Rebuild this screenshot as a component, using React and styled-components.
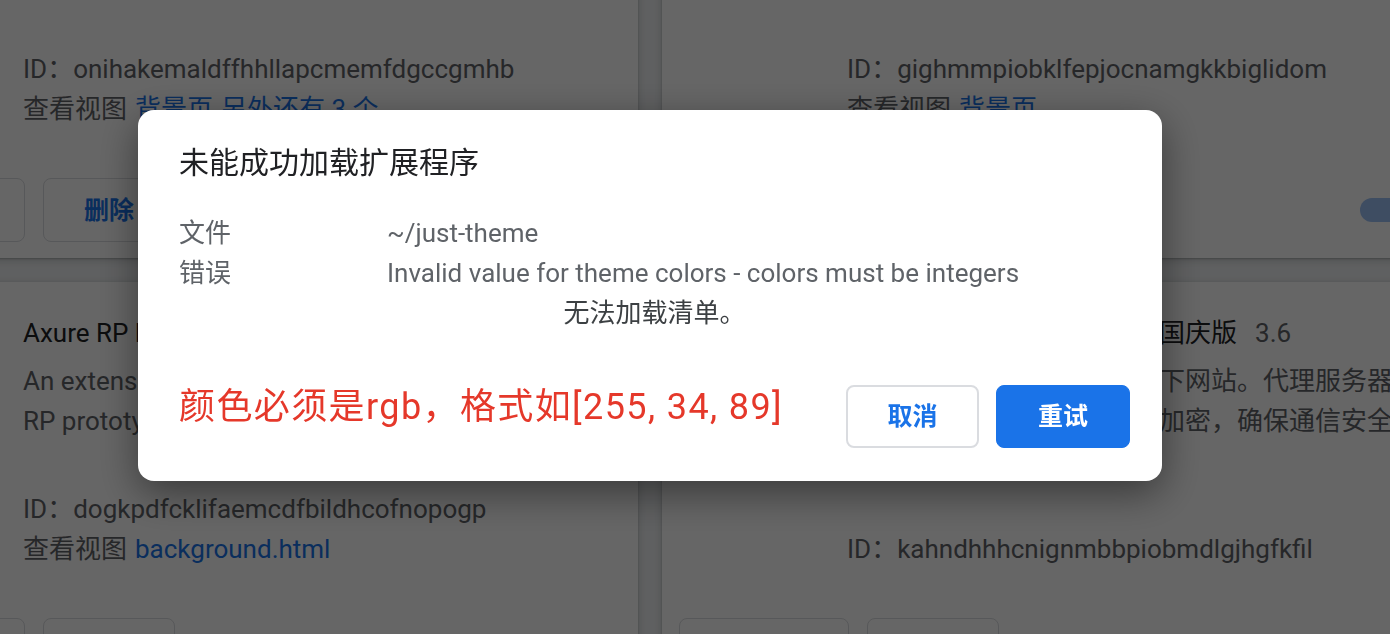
import React from 'react';
import styled, { createGlobalStyle } from 'styled-components';

const GlobalStyle = createGlobalStyle`
  html, body { margin: 0; padding: 0; }
  body {
    width: 1390px;
    height: 634px;
    overflow: hidden;
    background: #eef0f2;
    font-family: Roboto, "Noto Sans CJK SC", sans-serif;
  }
  * { box-sizing: border-box; }
`;

const Page = styled.main`
  display: grid;
  grid-template-columns: 800px 800px;
  column-gap: 24px;
  row-gap: 24px;
  margin: -20px 0 0 -162px;
`;

const Card = styled.section`
  background: #fff;
  border-radius: 8px;
  box-shadow: 0 1px 2px rgba(60, 64, 67, 0.3), 0 2px 6px 2px rgba(60, 64, 67, 0.15);
  display: flex;
  flex-direction: column;
  padding-top: ${(p) => p.$top}px;
`;

const Main = styled.div`
  flex: 1;
  display: flex;
  flex-direction: column;
  padding: 0 40px 0 185px;
  font-size: 26px;
  line-height: 40px;
  color: #5f6368;
  white-space: nowrap;
`;

const TitleRow = styled.div`
  display: flex;
  gap: 18px;
  color: #202124;
`;

const Version = styled.span`
  color: #5f6368;
`;

const Desc = styled.div`
  margin-top: 8px;
`;

const Line = styled.div``;

const Meta = styled.div`
  margin-top: ${(p) => p.$gap || 0}px;
`;

const Link = styled.a`
  color: #1a73e8;
  text-decoration: none;
  margin-left: 8px;
`;

const Actions = styled.div`
  display: flex;
  align-items: center;
  gap: 18px;
  margin-top: 49px;
  padding: 0 34px 16px 17px;
`;

const CardButton = styled.button`
  width: ${(p) => p.$w}px;
  height: 64px;
  padding: 0 0 4px;
  border: 1px solid #dadce0;
  border-radius: 8px;
  background: #fff;
  color: #1a73e8;
  font-family: inherit;
  font-size: 25px;
  font-weight: 700;
`;

const Toggle = styled.span`
  margin-left: auto;
  position: relative;
  width: 68px;
  height: 24px;
  border-radius: 12px;
  background: #9cc0f5;
  &::after {
    content: '';
    position: absolute;
    right: -4px;
    top: -4px;
    width: 32px;
    height: 32px;
    border-radius: 50%;
    background: #1a73e8;
  }
`;

const Overlay = styled.div`
  position: fixed;
  inset: 0;
  background: rgba(0, 0, 0, 0.6);
  display: flex;
  align-items: flex-start;
  padding: 110px 0 0 138px;
`;

const Dialog = styled.div`
  width: 1024px;
  background: #fff;
  border-radius: 16px;
  padding: 33px 32px 33px 41px;
  box-shadow: 0 12px 40px rgba(0, 0, 0, 0.45);
`;

const DialogTitle = styled.h1`
  margin: 0;
  font-size: 30px;
  line-height: 40px;
  font-weight: 400;
  color: #202124;
`;

const InfoGrid = styled.div`
  margin-top: 30px;
  display: grid;
  grid-template-columns: 208px 1fr;
  font-size: 26px;
  line-height: 40px;
  color: #5f6368;
`;

const Notice = styled.div`
  grid-column: 1 / -1;
  text-align: center;
  color: #3c4043;
`;

const Footer = styled.div`
  margin-top: 52px;
  display: flex;
  align-items: flex-start;
  gap: 17px;
`;

const Hint = styled.div`
  flex: 1;
  color: #e5382a;
  font-size: 36px;
  line-height: 44px;
  letter-spacing: 1.4px;
`;

const DialogButton = styled.button`
  width: ${(p) => p.$w}px;
  height: 63px;
  padding: 0 0 5px;
  border-radius: 8px;
  font-family: inherit;
  font-size: 25px;
  font-weight: 700;
  border: ${(p) => (p.$primary ? '1px solid #1a73e8' : '2px solid #dadce0')};
  background: ${(p) => (p.$primary ? '#1a73e8' : '#fff')};
  color: ${(p) => (p.$primary ? '#fff' : '#1a73e8')};
`;

function ExtCard({ top, title, version, desc, id, views, toggle = true }) {
  return (
    <Card $top={top}>
      <Main>
        {title && (
          <TitleRow>
            <span>{title}</span>
            <Version>{version}</Version>
          </TitleRow>
        )}
        {desc && (
          <Desc>
            {desc.map((l) => (
              <Line key={l}>{l}</Line>
            ))}
          </Desc>
        )}
        <Meta $gap={title ? 48 : 0}>ID：{id}</Meta>
        {views && (
          <Meta>
            查看视图
            {views.map((v) => (
              <Link key={v} href="#">
                {v}
              </Link>
            ))}
          </Meta>
        )}
      </Main>
      <Actions>
        <CardButton $w={170}>详细信息</CardButton>
        <CardButton $w={132}>删除</CardButton>
        {toggle && <Toggle />}
      </Actions>
    </Card>
  );
}

export default function App() {
  return (
    <>
      <GlobalStyle />
      <Page>
        <ExtCard top={69} id="onihakemaldffhhllapcmemfdgccgmhb" views={['背景页', '另外还有 3 个']} />
        <ExtCard top={69} id="gighmmpiobklfepjocnamgkkbiglidom" views={['背景页']} />
        <ExtCard
          top={31}
          title="Axure RP Extension for Chrome"
          version="0.6.4"
          desc={['An extension to allow local viewing of Axure', 'RP prototypes with Chrome.']}
          id="dogkpdfcklifaemcdfbildhcofnopogp"
          views={['background.html']}
        />
        <ExtCard
          top={31}
          title="海外网站访问助手极速通道国庆版"
          version="3.6"
          desc={[
            '让您安全快速访问谷歌等墙下网站。代理服务器分布全球',
            '节点，全程采用高强度数据加密，确保通信安全，保护隐私。',
            '无需任何配置。',
          ]}
          id="kahndhhhcnignmbbpiobmdlgjhgfkfil"
        />
      </Page>
      <Overlay>
        <Dialog role="dialog">
          <DialogTitle>未能成功加载扩展程序</DialogTitle>
          <InfoGrid>
            <span>文件</span>
            <span>~/just-theme</span>
            <span>错误</span>
            <span>Invalid value for theme colors - colors must be integers</span>
            <Notice>无法加载清单。</Notice>
          </InfoGrid>
          <Footer>
            <Hint>颜色必须是rgb，格式如[255, 34, 89]</Hint>
            <DialogButton $w={133}>取消</DialogButton>
            <DialogButton $w={134} $primary>
              重试
            </DialogButton>
          </Footer>
        </Dialog>
      </Overlay>
    </>
  );
}
